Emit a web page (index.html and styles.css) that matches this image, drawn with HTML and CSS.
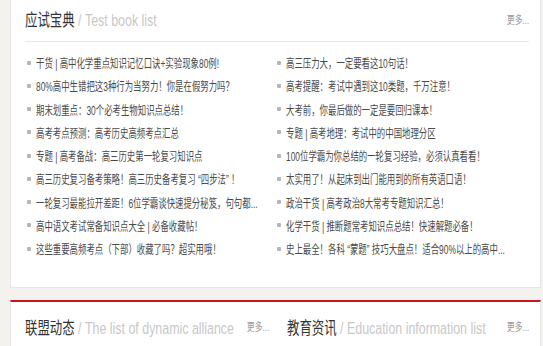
FILE: index.html
```html
<!DOCTYPE html>
<html lang="zh-CN">
<head>
  <meta charset="UTF-8" />
  <meta name="viewport" content="width=device-width, initial-scale=1" />
  <title>应试宝典</title>
  <link rel="stylesheet" href="styles.css">
</head>
<body>
  <div class="wrap">
    <div class="panel book-box">
      <div class="box-hd">
        <span class="hd-title">应试宝典<em> / Test book list</em></span>
        <a class="more" href="#">更多...</a>
      </div>
      <div class="news-cols">
        <ul class="news-list">
          <li><a href="#">干货 | 高中化学重点知识记忆口诀+实验现象80例!</a></li>
          <li><a href="#">80%高中生错把这3种行为当努力！你是在假努力吗？</a></li>
          <li><a href="#">期末划重点：30个必考生物知识点总结！</a></li>
          <li><a href="#">高考考点预测：高考历史高频考点汇总</a></li>
          <li><a href="#">专题 | 高考备战：高三历史第一轮复习知识点</a></li>
          <li><a href="#">高三历史复习备考策略！高三历史备考复习 “四步法” ！</a></li>
          <li><a href="#">一轮复习最能拉开差距！6位学霸谈快速提分秘笈，句句都...</a></li>
          <li><a href="#">高中语文考试常备知识点大全 | 必备收藏帖！</a></li>
          <li><a href="#">这些重要高频考点（下部）收藏了吗？超实用哦！</a></li>
        </ul>
        <ul class="news-list">
          <li><a href="#">高三压力大，一定要看这10句话！</a></li>
          <li><a href="#">高考提醒：考试中遇到这10类题，千万注意！</a></li>
          <li><a href="#">大考前，你最后做的一定是要回归课本！</a></li>
          <li><a href="#">专题 | 高考地理：考试中的中国地理分区</a></li>
          <li><a href="#">100位学霸为你总结的一轮复习经验，必须认真看看！</a></li>
          <li><a href="#">太实用了！从起床到出门能用到的所有英语口语！</a></li>
          <li><a href="#">政治干货 | 高考政治8大常考专题知识汇总！</a></li>
          <li><a href="#">化学干货 | 推断题常考知识点总结！快速解题必备！</a></li>
          <li><a href="#">史上最全！各科 “蒙题” 技巧大盘点！适合90%以上的高中...</a></li>
        </ul>
      </div>
    </div>

    <div class="panel news-box">
      <div class="news-col">
        <div class="box-hd">
          <span class="hd-title">联盟动态<em> / The list of dynamic alliance</em></span>
          <a class="more" href="#">更多...</a>
        </div>
      </div>
      <div class="news-col">
        <div class="box-hd">
          <span class="hd-title">教育资讯<em> / Education information list</em></span>
          <a class="more" href="#">更多...</a>
        </div>
      </div>
    </div>
  </div>
</body>
</html>
```

FILE: styles.css
```css
body {
  margin: 0;
  background: #f3f2ee;
  font-family: "Liberation Sans", "Noto Sans CJK SC", sans-serif;
  color: #4a4a4a;
}

a {
  color: inherit;
  text-decoration: none;
}

ul {
  margin: 0;
  padding: 0;
  list-style: none;
}

.wrap {
  padding: 0 2px 0 10px;
}

.panel {
  background: #fff;
  border: 1px solid #e6e6e6;
  padding: 0 11px 0 14px;
}

.book-box {
  border-top: 0;
  padding-bottom: 27px;
}

.box-hd {
  display: flex;
  align-items: center;
  justify-content: space-between;
  height: 37px;
  padding-bottom: 4px;
  white-space: nowrap;
}

.book-box .box-hd {
  border-bottom: 1px solid #e8e8e8;
}

.hd-title {
  flex: 1;
  min-width: 0;
  font-size: 17px;
  color: #333;
  transform: scaleX(.73);
  transform-origin: left center;
}

.hd-title em {
  font-style: normal;
  color: #c8c8c8;
}

.more {
  flex: none;
  font-size: 11px;
  color: #999;
  transform: scaleX(.72);
  transform-origin: right center;
}

.news-cols {
  display: grid;
  grid-template-columns: 250px minmax(0, 1fr);
  padding-top: 9px;
}

.news-list {
  min-width: 0;
}

.news-list li {
  display: flex;
  align-items: center;
  height: 23.25px;
  overflow: hidden;
  white-space: nowrap;
  font-size: 12px;
}

.news-list li::before {
  content: "";
  flex: none;
  width: 4px;
  height: 4px;
  margin: 0 5px 0 2px;
  border-radius: 1px;
  background: #b5b5b5;
}

.news-list li a {
  display: inline-block;
  transform: scaleX(.7);
  transform-origin: left center;
}

.news-box {
  margin-top: 12px;
  border-top: 2px solid #c9161e;
  display: grid;
  grid-template-columns: 244px minmax(0, 1fr);
  column-gap: 18px;
}

.news-col {
  min-width: 0;
}

.news-box .box-hd {
  padding-top: 7px;
  height: 34px;
}
```
